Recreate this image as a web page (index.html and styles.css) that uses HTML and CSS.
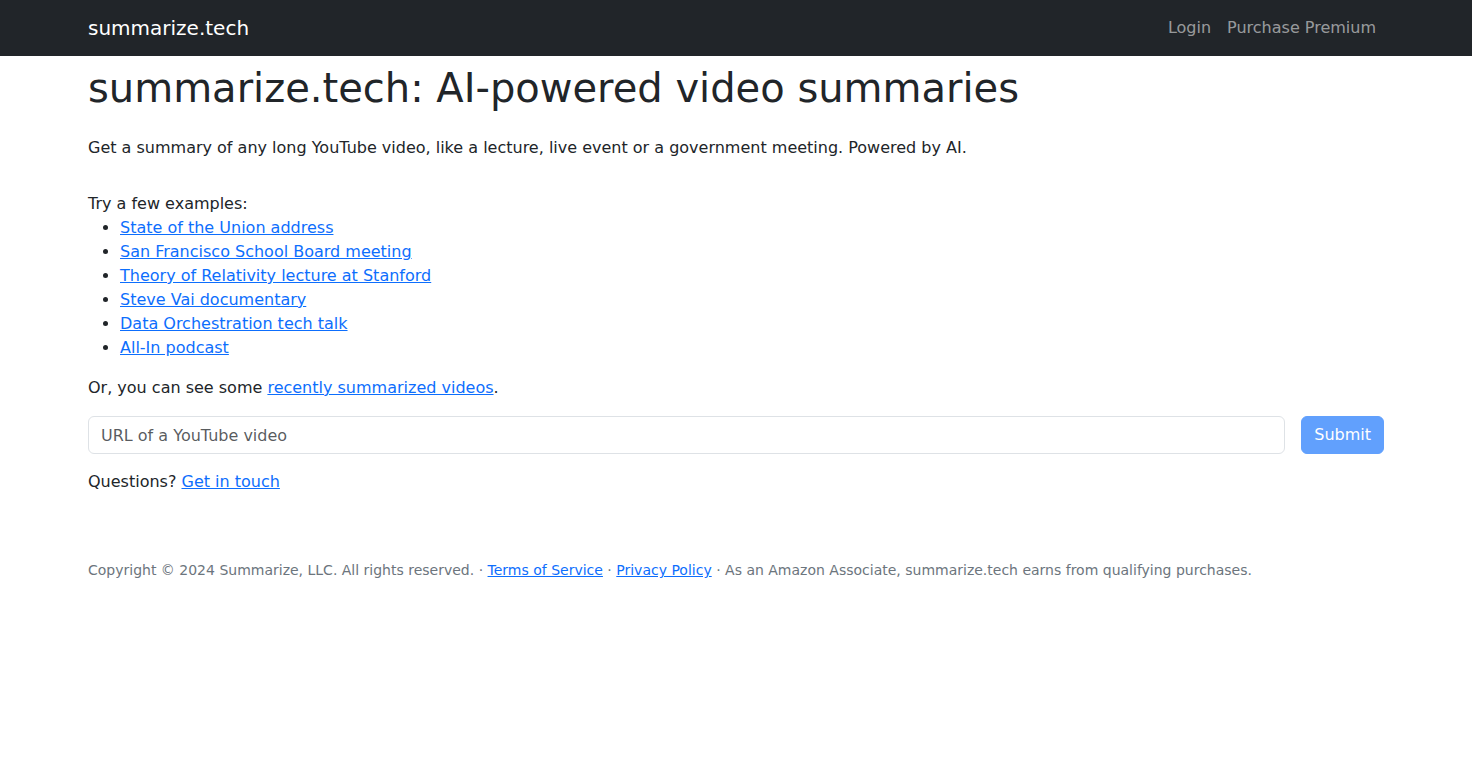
FILE: index.html
```html
<!DOCTYPE html>
<html lang="en">
<head>
<meta charset="utf-8">
<title>summarize.tech: AI-powered video summaries</title>
<link rel="stylesheet" href="styles.css">
</head>
<body>
<nav class="navbar">
  <div class="container nav-inner">
    <a class="brand" href="#">summarize.tech</a>
    <div class="nav-links">
      <a class="nav-link" href="#">Login</a>
      <a class="nav-link" href="#">Purchase Premium</a>
    </div>
  </div>
</nav>
<main class="container main">
  <h1 class="title">summarize.tech: AI-powered video summaries</h1>
  <p class="lead-text">Get a summary of any long YouTube video, like a lecture, live event or a government meeting. Powered by AI.</p>
  <div class="examples">
    Try a few examples:
    <ul class="example-list">
      <li><a href="#">State of the Union address</a></li>
      <li><a href="#">San Francisco School Board meeting</a></li>
      <li><a href="#">Theory of Relativity lecture at Stanford</a></li>
      <li><a href="#">Steve Vai documentary</a></li>
      <li><a href="#">Data Orchestration tech talk</a></li>
      <li><a href="#">All-In podcast</a></li>
    </ul>
  </div>
  <p class="recent">Or, you can see some <a href="#">recently summarized videos</a>.</p>
  <form class="url-form">
    <input class="form-control" type="text" placeholder="URL of a YouTube video">
    <button class="btn-submit" type="button" disabled>Submit</button>
  </form>
  <p class="questions">Questions? <a href="#">Get in touch</a></p>
</main>
<footer class="container footer">
  Copyright © 2024 Summarize, LLC. All rights reserved. · <a href="#">Terms of Service</a> · <a href="#">Privacy Policy</a> · As an Amazon Associate, summarize.tech earns from qualifying purchases.
</footer>
</body>
</html>
```

FILE: styles.css
```css
* { box-sizing: border-box; }
html, body { margin: 0; padding: 0; }
body {
  font-family: "DejaVu Sans", sans-serif;
  font-size: 16px;
  line-height: 24px;
  color: #212529;
  background: #fff;
}
a { color: #0d6efd; text-decoration: underline; }
.container {
  width: 1320px;
  margin: 0 auto;
  padding: 0 12px;
}
.navbar {
  background: #212529;
  padding: 8px 0;
}
.nav-inner {
  display: flex;
  align-items: center;
  justify-content: space-between;
}
.brand {
  color: #fff;
  text-decoration: none;
  font-size: 20px;
  line-height: 30px;
  padding: 5px 0;
}
.nav-links { display: flex; }
.nav-link {
  color: rgba(255,255,255,0.55);
  text-decoration: none;
  padding: 8px;
  line-height: 24px;
}
.main { padding-top: 8px; }
.title {
  font-size: 40px;
  font-weight: 400;
  line-height: 48px;
  margin: 0 0 8px;
}
.lead-text { margin: 24px 0 16px; }
.examples { margin-top: 32px; }
.example-list {
  margin: 0 0 16px;
  padding-left: 32px;
}
.recent { margin: 0 0 16px; }
.url-form {
  display: flex;
  gap: 16px;
  margin: 0 0 16px;
}
.form-control {
  flex: 1;
  height: 38px;
  border: 1px solid #dee2e6;
  border-radius: 6px;
  padding: 6px 12px;
  font: inherit;
  color: #212529;
}
.form-control::placeholder { color: rgba(33,37,41,0.75); }
.btn-submit {
  height: 38px;
  padding: 6px 12px;
  border: 1px solid #0d6efd;
  border-radius: 6px;
  background: #0d6efd;
  color: #fff;
  font: inherit;
  opacity: 0.65;
}
.questions { margin: 0; }
.footer {
  margin-top: 66px;
  font-size: 14px;
  line-height: 21px;
  color: #6c757d;
}
```
